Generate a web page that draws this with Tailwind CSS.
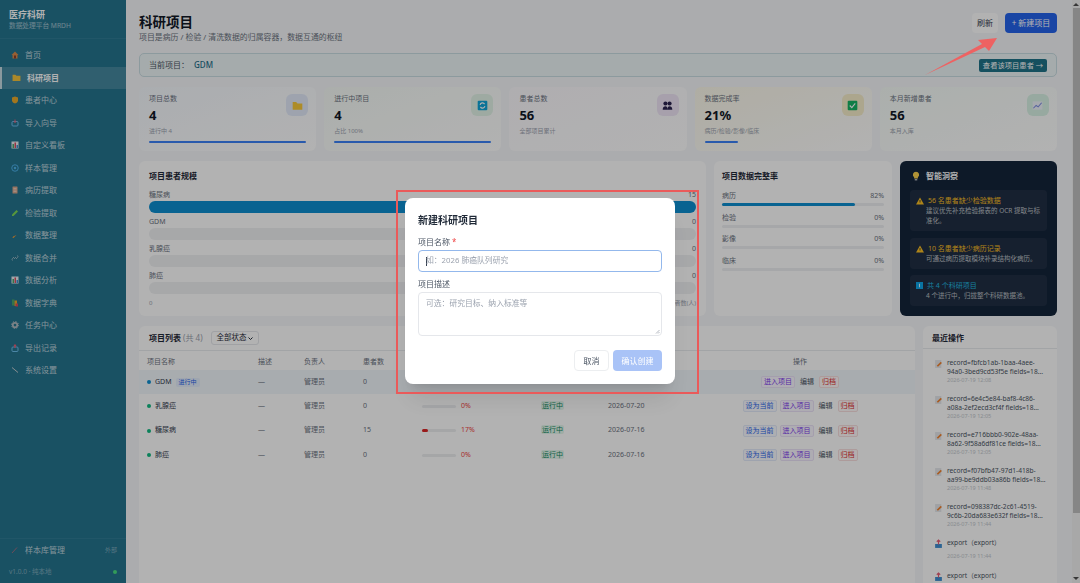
<!DOCTYPE html>
<html lang="zh-CN">
  <head>
    <meta charset="UTF-8" />
    <meta name="viewport" content="width=device-width, initial-scale=1.0" />
    <title>科研项目</title>
    <script src="https://cdn.jsdelivr.net/npm/@tailwindcss/browser@4"></script>
  </head>
  <body class="overflow-hidden bg-[#f5f7f9] font-['Noto_Sans','Noto_Sans_CJK_SC',sans-serif] text-[#1f2937]">
    <div class="flex h-[583px] w-[1080px] overflow-hidden">
      <!-- Sidebar -->
      <aside class="flex w-[126px] shrink-0 flex-col bg-[#25748f] text-[8px] text-white/70">
        <div class="h-[39px] border-b border-white/5 px-[9px] pt-[8px]">
          <div class="text-[9px] leading-[13px] font-bold text-white">医疗科研</div>
          <div class="text-[6.7px] leading-[10px] text-white/55">数据处理平台 MRDH</div>
        </div>
        <nav class="flex flex-col pt-[5px]">
          <a class="flex h-[22.5px] items-center gap-[6px] pl-[11px]"><svg class="h-[8px] w-[8px]" viewBox="0 0 16 16"><path d="M8 1 1 8h2v7h10V8h2z" fill="#d98a4b"/><rect x="6" y="9" width="4" height="6" fill="#8a3f2a"/></svg>首页</a>
          <a class="flex h-[22.5px] items-center gap-[6px] border-l-2 border-white/70 bg-white/15 pl-[10px] font-semibold text-white"><svg class="h-[9px] w-[9px]" viewBox="0 0 16 16"><path d="M1 3h5l2 2h7v9H1z" fill="#f5c33b"/></svg>科研项目</a>
          <a class="flex h-[22.5px] items-center gap-[6px] pl-[11px]"><svg class="h-[8px] w-[8px]" viewBox="0 0 16 16"><path d="M8 1 14 3v6c0 3-3 5-6 6-3-1-6-3-6-6V3z" fill="#e9a92c"/></svg>患者中心</a>
          <a class="flex h-[22.5px] items-center gap-[6px] pl-[11px]"><svg class="h-[8px] w-[8px]" viewBox="0 0 16 16"><rect x="2" y="5" width="12" height="9" rx="2" fill="none" stroke="#6cc0ee" stroke-width="2"/><path d="M8 1v6M6 5l2 2 2-2" stroke="#e85d75" stroke-width="2" fill="none"/></svg>导入向导</a>
          <a class="flex h-[22.5px] items-center gap-[6px] pl-[11px]"><svg class="h-[8px] w-[8px]" viewBox="0 0 16 16"><rect x="1" y="1" width="14" height="14" fill="#e8eef2"/><rect x="3" y="6" width="3" height="8" fill="#4aa66a"/><rect x="7" y="3" width="3" height="11" fill="#d94d5f"/><rect x="11" y="8" width="3" height="6" fill="#3f8fd2"/></svg>自定义看板</a>
          <a class="flex h-[22.5px] items-center gap-[6px] pl-[11px]"><svg class="h-[8px] w-[8px]" viewBox="0 0 16 16"><circle cx="8" cy="8" r="6.5" fill="none" stroke="#4eb3ea" stroke-width="2"/><circle cx="8" cy="8" r="2.5" fill="#4eb3ea"/></svg>样本管理</a>
          <a class="flex h-[22.5px] items-center gap-[6px] pl-[11px]"><svg class="h-[8px] w-[8px]" viewBox="0 0 16 16"><rect x="3" y="1" width="10" height="14" rx="1" fill="#d9a68c"/><path d="M5 5h6M5 8h6M5 11h6" stroke="#f5ece6"/></svg>病历提取</a>
          <a class="flex h-[22.5px] items-center gap-[6px] pl-[11px]"><svg class="h-[8px] w-[8px]" viewBox="0 0 16 16"><path d="M11 2 14 5 5 14H2v-3z" fill="#7ed957"/></svg>检验提取</a>
          <a class="flex h-[22.5px] items-center gap-[6px] pl-[11px]"><svg class="h-[8px] w-[8px]" viewBox="0 0 16 16"><path d="M11 8 5 14H3l1-3z" fill="#e89a3a"/></svg>数据整理</a>
          <a class="flex h-[22.5px] items-center gap-[6px] pl-[11px]"><svg class="h-[8px] w-[8px]" viewBox="0 0 16 16"><path d="M3 13a3 3 0 0 1 0-4l3-3M13 3a3 3 0 0 1 0 4l-3 3M6 10l4-4" fill="none" stroke="#b5c6cc" stroke-width="1.5"/></svg>数据合并</a>
          <a class="flex h-[22.5px] items-center gap-[6px] pl-[11px]"><svg class="h-[8px] w-[8px]" viewBox="0 0 16 16"><rect x="1" y="1" width="14" height="14" fill="#e8eef2"/><rect x="3" y="6" width="3" height="8" fill="#4aa66a"/><rect x="7" y="3" width="3" height="11" fill="#d94d5f"/><rect x="11" y="8" width="3" height="6" fill="#3f8fd2"/></svg>数据分析</a>
          <a class="flex h-[22.5px] items-center gap-[6px] pl-[11px]"><svg class="h-[8px] w-[8px]" viewBox="0 0 16 16"><rect x="2" y="1" width="5" height="12" fill="#4aa66a"/><rect x="7" y="3" width="5" height="11" fill="#e9a92c"/><rect x="9" y="9" width="5" height="6" fill="#d94d5f"/></svg>数据字典</a>
          <a class="flex h-[22.5px] items-center gap-[6px] pl-[11px]"><svg class="h-[8px] w-[8px]" viewBox="0 0 16 16"><circle cx="8" cy="8" r="4.5" fill="none" stroke="#b3bcc2" stroke-width="3.5"/><circle cx="8" cy="8" r="7" fill="none" stroke="#b3bcc2" stroke-width="2" stroke-dasharray="2.5 3"/></svg>任务中心</a>
          <a class="flex h-[22.5px] items-center gap-[6px] pl-[11px]"><svg class="h-[8px] w-[8px]" viewBox="0 0 16 16"><rect x="2" y="6" width="12" height="9" rx="2" fill="none" stroke="#6cc0ee" stroke-width="2"/><path d="M8 8V2M6 4l2-2 2 2" stroke="#e85d75" stroke-width="2.5" fill="none"/></svg>导出记录</a>
          <a class="flex h-[22.5px] items-center gap-[6px] pl-[11px]"><svg class="h-[8px] w-[8px]" viewBox="0 0 16 16"><path d="M2 3 14 13" stroke="#c2ccd1" stroke-width="2"/></svg>系统设置</a>
        </nav>
        <div class="mt-auto flex h-[23px] items-center gap-[6px] border-t border-white/5 pr-[9px] pl-[11px]">
          <svg class="h-[8px] w-[8px]" viewBox="0 0 16 16"><path d="M2 14 12 3" stroke="#c56a7a" stroke-width="1.5"/></svg>
          <span class="flex-1">样本库管理</span><span class="text-[6px] text-white/40">外部</span>
        </div>
        <div class="flex h-[22px] items-center justify-between px-[9px] text-[6.5px] text-white/40">
          <span>v1.0.0 · 纯本地</span><span class="h-[4px] w-[4px] rounded-full bg-[#4ade80]"></span>
        </div>
      </aside>

      <!-- Main -->
      <main class="flex min-w-0 flex-1 flex-col gap-[10px] overflow-hidden pt-[13px] pr-[15px] pl-[13px]">
        <header class="flex h-[30px] items-start justify-between">
          <div>
            <h1 class="text-[13.5px] leading-[19px] font-bold text-[#111827]">科研项目</h1>
            <p class="text-[7.9px] leading-[11px] text-[#6b7280]">项目是病历 / 检验 / 清洗数据的归属容器，数据互通的枢纽</p>
          </div>
          <div class="flex gap-[7px] text-[8px]">
            <button class="h-[20px] w-[26px] rounded-[4px] bg-white text-[#374151]">刷新</button>
            <button class="h-[20px] w-[52px] rounded-[4px] bg-[#2563eb] text-white">+ 新建项目</button>
          </div>
        </header>

        <section class="flex h-[24px] items-center justify-between rounded-[5px] border border-[#c9dde2] bg-[#edf5f7] pr-[9px] pl-[9px] text-[8px] text-[#4b5563]">
          <div class="flex items-center gap-[5px]"><span>当前项目：</span><span class="font-medium text-[#1e6f8a]">GDM</span></div>
          <button class="h-[13px] w-[68px] rounded-[2px] bg-[#1f7389] text-[7.3px] leading-[13px] text-white">查看该项目患者 →</button>
        </section>

        <section class="grid grid-cols-5 gap-[8px]">
          <div class="relative h-[64px] rounded-[6px] bg-gradient-to-br from-[#f4f8fd] to-white px-[10px] pt-[6px]">
            <div class="text-[7px] leading-[12px] text-[#6b7280]">项目总数</div>
            <div class="text-[13px] leading-[20px] font-bold text-[#111827]">4</div>
            <div class="text-[6px] leading-[12px] text-[#9ca3af]">进行中 4</div>
            <div class="mt-[4px] h-[2px] w-full rounded-full bg-[#3b82f6]"></div>
            <div class="absolute top-[7px] right-[8px] flex h-[22px] w-[22px] items-center justify-center rounded-[6px] bg-[#e3eafa]"><svg class="h-[11px] w-[11px]" viewBox="0 0 16 16"><path d="M1 3h5l2 2h7v9H1z" fill="#f8c93c"/></svg></div>
          </div>
          <div class="relative h-[64px] rounded-[6px] bg-gradient-to-br from-[#f5faf6] to-white px-[10px] pt-[6px]">
            <div class="text-[7px] leading-[12px] text-[#6b7280]">进行中项目</div>
            <div class="text-[13px] leading-[20px] font-bold text-[#111827]">4</div>
            <div class="text-[6px] leading-[12px] text-[#9ca3af]">占比 100%</div>
            <div class="mt-[4px] h-[2px] w-full rounded-full bg-[#3b82f6]"></div>
            <div class="absolute top-[7px] right-[8px] flex h-[22px] w-[22px] items-center justify-center rounded-[6px] bg-[#e3f4e8]"><svg class="h-[11px] w-[11px]" viewBox="0 0 16 16"><rect x="1" y="1" width="14" height="14" rx="1.5" fill="#0ea5d9"/><path d="M4.5 7a3.5 3.5 0 0 1 6.5-1M11.5 9a3.5 3.5 0 0 1-6.5 1" fill="none" stroke="#fff" stroke-width="1.6"/></svg></div>
          </div>
          <div class="relative h-[64px] rounded-[6px] bg-gradient-to-br from-[#fbf9fd] to-white px-[10px] pt-[6px]">
            <div class="text-[7px] leading-[12px] text-[#6b7280]">患者总数</div>
            <div class="text-[13px] leading-[20px] font-bold text-[#111827]">56</div>
            <div class="text-[6px] leading-[12px] text-[#9ca3af]">全部项目累计</div>
            <div class="absolute top-[7px] right-[8px] flex h-[22px] w-[22px] items-center justify-center rounded-[6px] bg-[#efe6f6]"><svg class="h-[11px] w-[11px]" viewBox="0 0 16 16"><circle cx="5" cy="5" r="3" fill="#2b2350"/><circle cx="11" cy="5" r="3" fill="#2b2350"/><path d="M1 14c0-4 2-5 4-5s3 1 3 5zM8 14c0-4 1-5 3-5s4 1 4 5z" fill="#2b2350"/></svg></div>
          </div>
          <div class="relative h-[64px] rounded-[6px] bg-gradient-to-br from-[#fbf8ea] to-white px-[10px] pt-[6px]">
            <div class="text-[7px] leading-[12px] text-[#6b7280]">数据完成率</div>
            <div class="text-[13px] leading-[20px] font-bold text-[#111827]">21%</div>
            <div class="text-[6px] leading-[12px] text-[#9ca3af]">病历/检验/影像/临床</div>
            <div class="mt-[4px] h-[2px] w-[21%] rounded-full bg-[#3b82f6]"></div>
            <div class="absolute top-[7px] right-[8px] flex h-[22px] w-[22px] items-center justify-center rounded-[6px] bg-[#f6eecb]"><svg class="h-[11px] w-[11px]" viewBox="0 0 16 16"><rect x="1" y="1" width="14" height="14" rx="1.5" fill="#16b364"/><path d="m4 8 3 3 5-6" fill="none" stroke="#fff" stroke-width="1.6"/></svg></div>
          </div>
          <div class="relative h-[64px] rounded-[6px] bg-gradient-to-br from-[#f5fbf7] to-white px-[10px] pt-[6px]">
            <div class="text-[7px] leading-[12px] text-[#6b7280]">本月新增患者</div>
            <div class="text-[13px] leading-[20px] font-bold text-[#111827]">56</div>
            <div class="text-[6px] leading-[12px] text-[#9ca3af]">本月入库</div>
            <div class="absolute top-[7px] right-[8px] flex h-[22px] w-[22px] items-center justify-center rounded-[6px] bg-[#d9f2e5]"><svg class="h-[11px] w-[11px]" viewBox="0 0 16 16"><rect x="1" y="2" width="14" height="12" fill="#eef2fa"/><path d="m2 12 4-4 3 2 5-6" fill="none" stroke="#7c8ce0" stroke-width="1.5"/></svg></div>
          </div>
        </section>

        <section class="grid h-[155px] grid-cols-[567px_178px_157px] gap-[8px]">
          <div class="rounded-[6px] bg-white px-[10px] pt-[8px]">
            <h2 class="mb-[8px] text-[8px] leading-[13px] font-semibold text-[#1f2937]">项目患者规模</h2>
            <div class="flex flex-col gap-[4px] text-[7px] text-[#6b7280]">
              <div><div class="flex h-[10px] items-center justify-between leading-[10px]"><span>糖尿病</span><span>15</span></div><div class="mt-[1px] h-[12px] rounded-full bg-[#0e8fd0]"></div></div>
              <div><div class="flex h-[10px] items-center justify-between leading-[10px]"><span>GDM</span><span>0</span></div><div class="mt-[1px] h-[12px] rounded-full bg-[#f0f1f3]"></div></div>
              <div><div class="flex h-[10px] items-center justify-between leading-[10px]"><span>乳腺癌</span><span>0</span></div><div class="mt-[1px] h-[12px] rounded-full bg-[#f0f1f3]"></div></div>
              <div><div class="flex h-[10px] items-center justify-between leading-[10px]"><span>肺癌</span><span>0</span></div><div class="mt-[1px] h-[12px] rounded-full bg-[#f0f1f3]"></div></div>
              <div class="flex justify-between text-[6px] leading-[10px] text-[#9ca3af]"><span>0</span><span>患者数(人)</span></div>
            </div>
          </div>
          <div class="rounded-[6px] bg-white px-[8px] pt-[8px]">
            <h2 class="mb-[9px] text-[8px] leading-[13px] font-semibold text-[#1f2937]">项目数据完整率</h2>
            <div class="flex flex-col gap-[6.5px] text-[7px] leading-[10px] text-[#6b7280]">
              <div><div class="flex justify-between"><span>病历</span><span>82%</span></div><div class="mt-[2px] h-[3px] rounded-full bg-[#eef0f2]"><div class="h-full w-[82%] rounded-full bg-[#0e8fd0]"></div></div></div>
              <div><div class="flex justify-between"><span>检验</span><span>0%</span></div><div class="mt-[2px] h-[3px] rounded-full bg-[#eef0f2]"></div></div>
              <div><div class="flex justify-between"><span>影像</span><span>0%</span></div><div class="mt-[2px] h-[3px] rounded-full bg-[#eef0f2]"></div></div>
              <div><div class="flex justify-between"><span>临床</span><span>0%</span></div><div class="mt-[2px] h-[3px] rounded-full bg-[#eef0f2]"></div></div>
            </div>
          </div>
          <div class="rounded-[6px] bg-[#14243a] px-[10px] pt-[8px] text-white">
            <div class="mb-[8px] flex h-[13px] items-center gap-[5px] pl-[1px] text-[8px] font-semibold">
              <svg class="h-[10px] w-[10px]" viewBox="0 0 16 16"><path d="M8 1a5 5 0 0 0-3 9v2h6v-2a5 5 0 0 0-3-9z" fill="#fbd24e"/><rect x="6" y="13" width="4" height="2" fill="#c9ccd1"/></svg>智能洞察
            </div>
            <div class="mb-[7px] h-[41px] rounded-[4px] bg-white/5 px-[6px] pt-[5px]">
              <div class="flex items-center gap-[4px] text-[7px] leading-[11px] text-[#fbbf24]"><svg class="h-[8px] w-[8px] shrink-0" viewBox="0 0 16 16"><path d="M8 1 16 15H0z" fill="#fbbf24"/><path d="M8 6v5" stroke="#14243a" stroke-width="1.5"/></svg>56 名患者缺少检验数据</div>
              <p class="pl-[10px] text-[6.5px] leading-[10px] text-white/70">建议优先补充检验报表的 OCR 提取与标准化。</p>
            </div>
            <div class="mb-[6px] h-[31px] rounded-[4px] bg-white/5 px-[6px] pt-[5px]">
              <div class="flex items-center gap-[4px] text-[7px] leading-[11px] text-[#fbbf24]"><svg class="h-[8px] w-[8px] shrink-0" viewBox="0 0 16 16"><path d="M8 1 16 15H0z" fill="#fbbf24"/><path d="M8 6v5" stroke="#14243a" stroke-width="1.5"/></svg>10 名患者缺少病历记录</div>
              <p class="pl-[10px] text-[6.5px] leading-[10px] text-white/70">可通过病历提取模块补录结构化病历。</p>
            </div>
            <div class="h-[31px] rounded-[4px] bg-white/5 px-[6px] pt-[5px]">
              <div class="flex items-center gap-[4px] text-[7px] leading-[11px] text-[#22b8e0]"><svg class="h-[7px] w-[7px] shrink-0" viewBox="0 0 16 16"><rect width="16" height="16" fill="#0ea5e9"/><rect x="7" y="4" width="2" height="8" fill="#fff"/></svg>共 4 个科研项目</div>
              <p class="pl-[10px] text-[6.5px] leading-[10px] text-white/70">4 个进行中，归拢整个科研数据池。</p>
            </div>
          </div>
        </section>

        <section class="grid min-h-0 flex-1 grid-cols-[776px_134px] gap-[8px]">
          <div class="rounded-t-[6px] bg-white">
            <div class="flex h-[25px] items-center gap-[8px] border-b border-[#e8ebee] px-[10px]">
              <h2 class="text-[8px] font-semibold text-[#1f2937]">项目列表 <span class="font-normal text-[#9ca3af]">(共 4)</span></h2>
              <div class="flex h-[14px] w-[48px] items-center justify-between rounded-[3px] border border-[#e5e7eb] px-[5px] text-[7.5px]">全部状态<svg class="h-[5px] w-[5px]" viewBox="0 0 10 10"><path d="m1 3 4 4 4-4" fill="none" stroke="#1f2937" stroke-width="2"/></svg></div>
            </div>
            <table class="w-full table-fixed text-left text-[7px] text-[#6b7280]">
              <thead>
                <tr class="h-[19px]">
                  <th class="w-[119px] pt-[3px] pl-[8px] font-normal">项目名称</th>
                  <th class="w-[46px] pt-[3px] font-normal">描述</th>
                  <th class="w-[59px] pt-[3px] font-normal">负责人</th>
                  <th class="w-[59px] pt-[3px] font-normal">患者数</th>
                  <th class="w-[119px]"></th>
                  <th class="w-[67px]"></th>
                  <th class="w-[132px]"></th>
                  <th class="w-[120px] pt-[3px] text-center font-normal">操作</th>
                  <th></th>
                </tr>
              </thead>
              <tbody>
                <tr class="h-[24.3px] bg-[#f1f6fb]">
                  <td class="pl-[8px]"><span class="flex items-center gap-[4px] text-[#374151]"><span class="h-[4px] w-[4px] rounded-full bg-[#0e8fd0]"></span>GDM <span class="rounded-[2px] bg-[#e3ecfb] px-[3px] text-[6px] leading-[9px] text-[#2563eb]">进行中</span></span></td>
                  <td>—</td><td>管理员</td><td>0</td>
                  <td></td><td></td><td></td>
                  <td>
                    <div class="flex justify-center gap-[3px] text-[7px]">
                      <span class="rounded-[2px] border border-[#ebe3f8] bg-[#faf7ff] px-[2px] leading-[10px] text-[#7c3aed]">进入项目</span>
                      <span class="px-[2px] leading-[12px] text-[#4b5563]">编辑</span>
                      <span class="rounded-[2px] border border-[#f8dede] bg-[#fffafa] px-[2px] leading-[10px] text-[#dc2626]">归档</span>
                    </div>
                  </td>
                  <td></td>
                </tr>
                <tr class="h-[24.3px]">
                  <td class="pl-[8px]"><span class="flex items-center gap-[4px] text-[#374151]"><span class="h-[4px] w-[4px] rounded-full bg-[#10b981]"></span>乳腺癌</span></td>
                  <td>—</td><td>管理员</td><td>0</td>
                  <td><span class="flex items-center gap-[5px]"><span class="h-[3px] w-[34px] rounded-full bg-[#eceef0]"></span><span class="text-[#ef4444]">0%</span></span></td>
                  <td><span class="rounded-[2px] bg-[#e4f6ec] px-[1px] text-[#0f8a63]">运行中</span></td>
                  <td>2026-07-20</td>
                  <td>
                    <div class="flex justify-center gap-[3px] text-[7px]">
                      <span class="rounded-[2px] border border-[#e3eafa] bg-[#f8faff] px-[2px] leading-[10px] text-[#2563eb]">设为当前</span>
                      <span class="rounded-[2px] border border-[#ebe3f8] bg-[#faf7ff] px-[2px] leading-[10px] text-[#7c3aed]">进入项目</span>
                      <span class="px-[2px] leading-[12px] text-[#4b5563]">编辑</span>
                      <span class="rounded-[2px] border border-[#f8dede] bg-[#fffafa] px-[2px] leading-[10px] text-[#dc2626]">归档</span>
                    </div>
                  </td>
                  <td></td>
                </tr>
                <tr class="h-[24.3px]">
                  <td class="pl-[8px]"><span class="flex items-center gap-[4px] text-[#374151]"><span class="h-[4px] w-[4px] rounded-full bg-[#10b981]"></span>糖尿病</span></td>
                  <td>—</td><td>管理员</td><td>15</td>
                  <td><span class="flex items-center gap-[5px]"><span class="h-[3px] w-[34px] rounded-full bg-[#eceef0]"><span class="block h-full w-[17%] rounded-full bg-[#dc2626]"></span></span><span class="text-[#ef4444]">17%</span></span></td>
                  <td><span class="rounded-[2px] bg-[#e4f6ec] px-[1px] text-[#0f8a63]">运行中</span></td>
                  <td>2026-07-16</td>
                  <td>
                    <div class="flex justify-center gap-[3px] text-[7px]">
                      <span class="rounded-[2px] border border-[#e3eafa] bg-[#f8faff] px-[2px] leading-[10px] text-[#2563eb]">设为当前</span>
                      <span class="rounded-[2px] border border-[#ebe3f8] bg-[#faf7ff] px-[2px] leading-[10px] text-[#7c3aed]">进入项目</span>
                      <span class="px-[2px] leading-[12px] text-[#4b5563]">编辑</span>
                      <span class="rounded-[2px] border border-[#f8dede] bg-[#fffafa] px-[2px] leading-[10px] text-[#dc2626]">归档</span>
                    </div>
                  </td>
                  <td></td>
                </tr>
                <tr class="h-[24.3px]">
                  <td class="pl-[8px]"><span class="flex items-center gap-[4px] text-[#374151]"><span class="h-[4px] w-[4px] rounded-full bg-[#10b981]"></span>肺癌</span></td>
                  <td>—</td><td>管理员</td><td>0</td>
                  <td><span class="flex items-center gap-[5px]"><span class="h-[3px] w-[34px] rounded-full bg-[#eceef0]"></span><span class="text-[#ef4444]">0%</span></span></td>
                  <td><span class="rounded-[2px] bg-[#e4f6ec] px-[1px] text-[#0f8a63]">运行中</span></td>
                  <td>2026-07-16</td>
                  <td>
                    <div class="flex justify-center gap-[3px] text-[7px]">
                      <span class="rounded-[2px] border border-[#e3eafa] bg-[#f8faff] px-[2px] leading-[10px] text-[#2563eb]">设为当前</span>
                      <span class="rounded-[2px] border border-[#ebe3f8] bg-[#faf7ff] px-[2px] leading-[10px] text-[#7c3aed]">进入项目</span>
                      <span class="px-[2px] leading-[12px] text-[#4b5563]">编辑</span>
                      <span class="rounded-[2px] border border-[#f8dede] bg-[#fffafa] px-[2px] leading-[10px] text-[#dc2626]">归档</span>
                    </div>
                  </td>
                  <td></td>
                </tr>
              </tbody>
            </table>
          </div>
          <div class="rounded-t-[6px] bg-white">
            <h2 class="h-[23px] border-b border-[#e8ebee] px-[9px] text-[8px] leading-[23px] font-semibold text-[#1f2937]">最近操作</h2>
            <ul class="flex flex-col gap-[9px] pt-[9px] pr-[6px] pl-[11px] text-[6.6px] leading-[9px] text-[#4b5563]">
              <li class="flex h-[27px] gap-[4px]"><svg class="mt-[1px] h-[10px] w-[9px] shrink-0" viewBox="0 0 16 16"><rect x="2" y="1" width="11" height="14" fill="#e5e7eb"/><path d="m6 12 7-7" stroke="#f0822e" stroke-width="3"/></svg><div class="min-w-0">record=fbfcb1ab-1baa-4aee-94a0-3bed9cd53f5e fields=18...<div class="text-[5.5px] text-[#c3c7cd]">2026-07-19 12:08</div></div></li>
              <li class="flex h-[27px] gap-[4px]"><svg class="mt-[1px] h-[10px] w-[9px] shrink-0" viewBox="0 0 16 16"><rect x="2" y="1" width="11" height="14" fill="#e5e7eb"/><path d="m6 12 7-7" stroke="#f0822e" stroke-width="3"/></svg><div class="min-w-0">record=6e4c5e84-baf8-4c86-a08a-2ef2ecd3cf4f fields=18...<div class="text-[5.5px] text-[#c3c7cd]">2026-07-19 12:05</div></div></li>
              <li class="flex h-[27px] gap-[4px]"><svg class="mt-[1px] h-[10px] w-[9px] shrink-0" viewBox="0 0 16 16"><rect x="2" y="1" width="11" height="14" fill="#e5e7eb"/><path d="m6 12 7-7" stroke="#f0822e" stroke-width="3"/></svg><div class="min-w-0">record=e716bbb0-902e-48aa-8a62-9f58a6df81ce fields=18...<div class="text-[5.5px] text-[#c3c7cd]">2026-07-19 12:05</div></div></li>
              <li class="flex h-[27px] gap-[4px]"><svg class="mt-[1px] h-[10px] w-[9px] shrink-0" viewBox="0 0 16 16"><rect x="2" y="1" width="11" height="14" fill="#e5e7eb"/><path d="m6 12 7-7" stroke="#f0822e" stroke-width="3"/></svg><div class="min-w-0">record=f07bfb47-97d1-418b-aa99-be9ddb03a86b fields=18...<div class="text-[5.5px] text-[#c3c7cd]">2026-07-19 11:48</div></div></li>
              <li class="flex h-[27px] gap-[4px]"><svg class="mt-[1px] h-[10px] w-[9px] shrink-0" viewBox="0 0 16 16"><rect x="2" y="1" width="11" height="14" fill="#e5e7eb"/><path d="m6 12 7-7" stroke="#f0822e" stroke-width="3"/></svg><div class="min-w-0">record=098387dc-2c61-4519-9c6b-20da683e632f fields=18...<div class="text-[5.5px] text-[#c3c7cd]">2026-07-19 11:44</div></div></li>
              <li class="flex h-[24px] gap-[4px]"><svg class="mt-[1px] h-[10px] w-[9px] shrink-0" viewBox="0 0 16 16"><rect x="2" y="8" width="12" height="7" fill="#3f8fd2"/><path d="M8 9V2M5 4l3-3 3 3" stroke="#e85d75" stroke-width="2" fill="none"/></svg><div class="min-w-0">export（export）<div class="mt-[5px] text-[5.5px] text-[#c3c7cd]">2026-07-19 11:44</div></div></li>
              <li class="flex h-[24px] gap-[4px]"><svg class="mt-[1px] h-[10px] w-[9px] shrink-0" viewBox="0 0 16 16"><rect x="2" y="8" width="12" height="7" fill="#3f8fd2"/><path d="M8 9V2M5 4l3-3 3 3" stroke="#e85d75" stroke-width="2" fill="none"/></svg><div class="min-w-0">export（export）</div></li>
            </ul>
          </div>
        </section>
      </main>

      <!-- Scrollbar -->
      <div class="flex w-[8px] shrink-0 flex-col items-center bg-[#f1f1f1] pt-[3px] pb-[3px]">
        <div class="h-0 w-0 border-x-[3px] border-b-[3px] border-x-transparent border-b-[#505050]"></div>
        <div class="mt-[2px] h-[505px] w-[7px] bg-[#c1c1c1]"></div>
        <div class="mt-auto h-0 w-0 border-x-[3px] border-t-[3px] border-x-transparent border-t-[#505050]"></div>
      </div>
    </div>

    <!-- Modal overlay -->
    <div class="fixed inset-0 flex items-start justify-center bg-black/30 pt-[198px] backdrop-blur-[0.7px]">
      <div class="h-[186px] w-[270px] rounded-[8px] bg-white px-[13px] pt-[14px] shadow-xl">
        <h3 class="text-[10px] leading-[16px] font-semibold text-[#1f2937]">新建科研项目</h3>
        <label class="mt-[8px] block text-[8px] leading-[12px] text-[#4b5563]">项目名称 <span class="text-[#ef4444]">*</span></label>
        <div class="mt-[2px] flex h-[22px] items-center rounded-[4px] border border-[#93b8ec] px-[7px] text-[7.8px] text-[#9ca3af]"><span class="mr-[-1px] h-[9px] w-px bg-[#374151]"></span>如：2026 肺癌队列研究</div>
        <label class="mt-[6px] block text-[8px] leading-[12px] text-[#4b5563]">项目描述</label>
        <div class="relative mt-[2px] h-[44px] rounded-[4px] border border-[#e5e7eb] px-[7px] pt-[4px] text-[7.8px] leading-[12px] text-[#9ca3af]">可选：研究目标、纳入标准等
          <svg class="absolute right-[1px] bottom-[1px] h-[5px] w-[5px]" viewBox="0 0 10 10"><path d="M9 2 2 9M9 6 6 9" stroke="#6b7280"/></svg>
        </div>
        <div class="mt-[14px] flex justify-end gap-[4px] text-[8px]">
          <button class="h-[21px] w-[35px] rounded-[4px] border border-[#eceef0] text-[#4b5563]">取消</button>
          <button class="h-[21px] w-[49px] rounded-[4px] bg-[#a9c3f7] text-white">确认创建</button>
        </div>
      </div>
    </div>

    <!-- Screenshot annotations -->
    <svg class="pointer-events-none fixed inset-0 h-[583px] w-[1080px]" viewBox="0 0 1080 583">
      <rect x="397" y="191" width="301" height="202" fill="none" stroke="#ea5a5a" stroke-width="2"/>
      <path d="M925 75 982 44 978 40 997 38 989 51 985 47z" fill="#ee6262"/>
    </svg>
  </body>
</html>
